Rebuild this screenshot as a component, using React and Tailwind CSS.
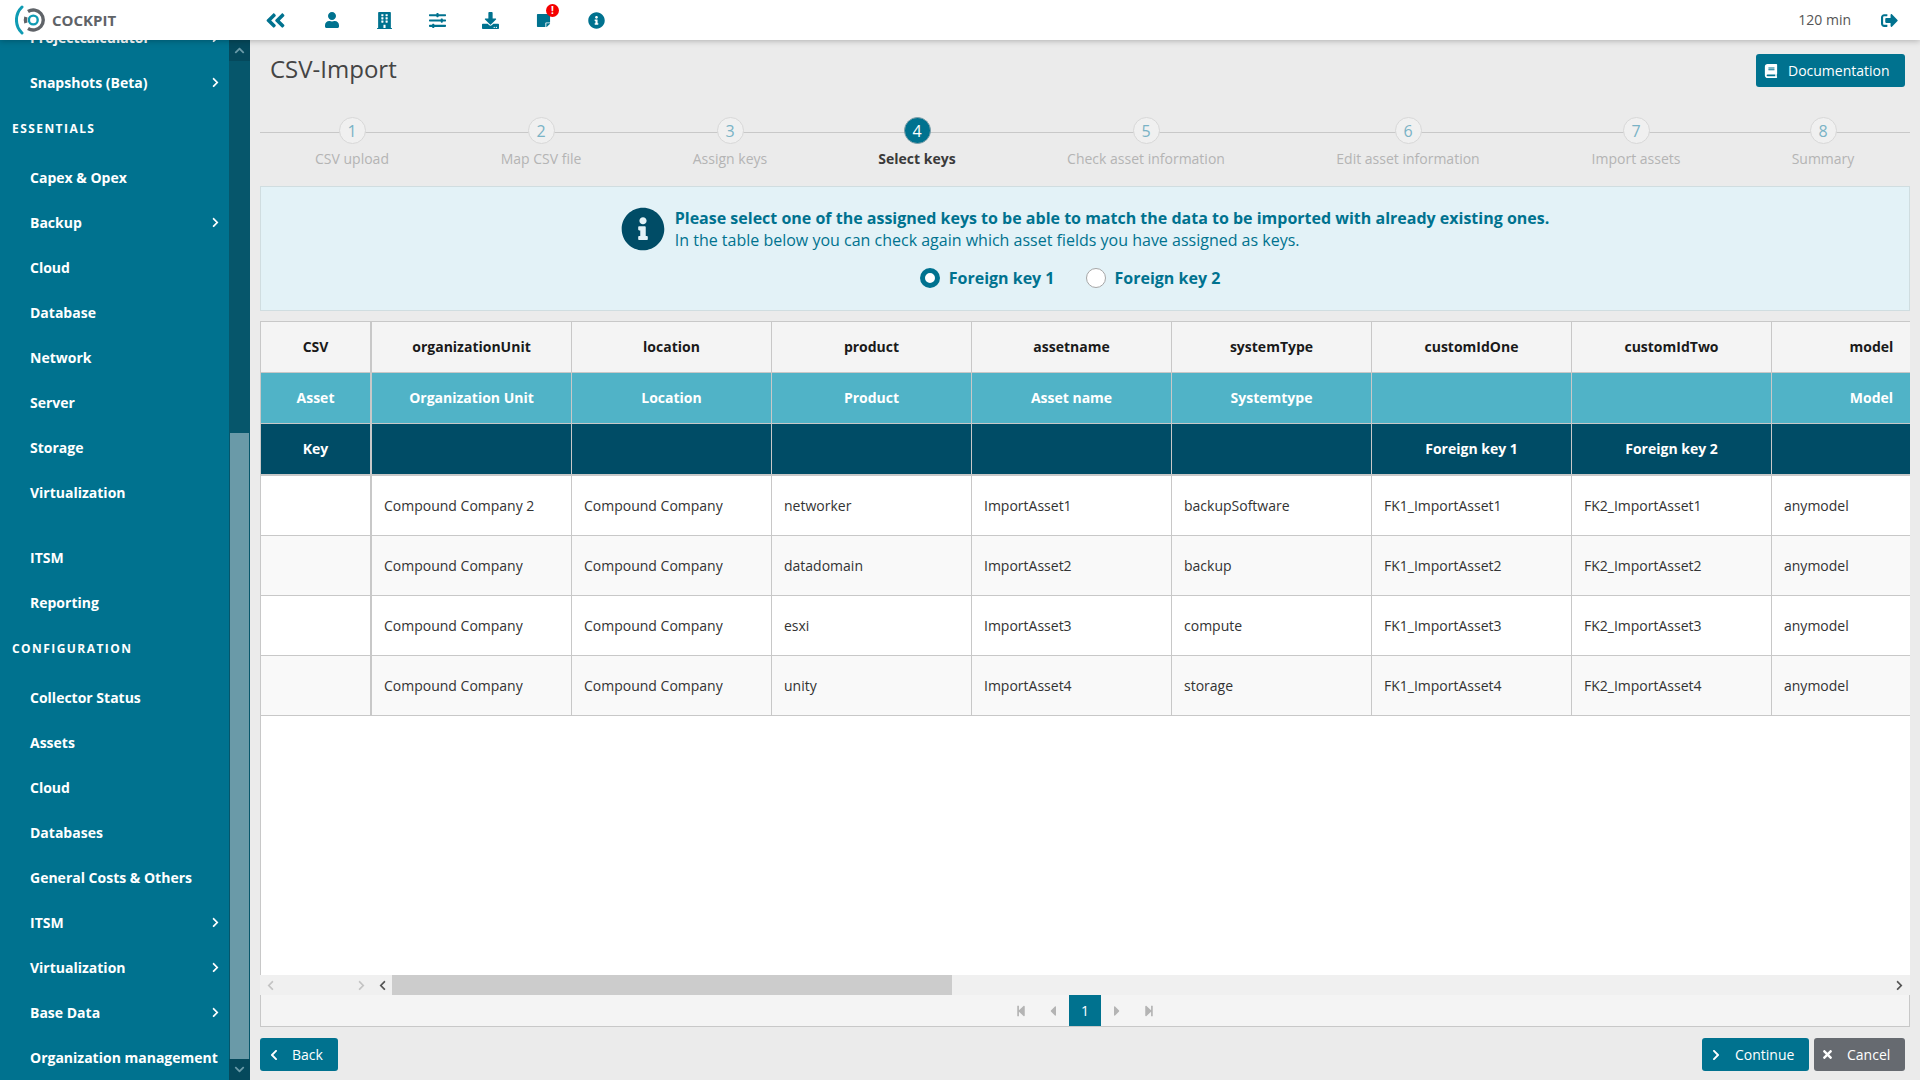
import React from 'react';
import {
  FaAngleDoubleLeft, FaUser, FaBuilding, FaSlidersH, FaDownload, FaStickyNote, FaInfoCircle,
  FaSignOutAlt, FaBook, FaChevronRight, FaChevronLeft, FaChevronUp, FaChevronDown, FaTimes,
  FaStepBackward, FaStepForward, FaCaretLeft, FaCaretRight,
} from 'react-icons/fa';

const menuTop = [
  { label: 'Projectcalculator', arrow: true },
  { label: 'Snapshots (Beta)', arrow: true },
  { head: 'ESSENTIALS' },
  { label: 'Capex & Opex' },
  { label: 'Backup', arrow: true },
  { label: 'Cloud' },
  { label: 'Database' },
  { label: 'Network' },
  { label: 'Server' },
  { label: 'Storage' },
  { label: 'Virtualization' },
  { gap: true },
  { label: 'ITSM' },
  { label: 'Reporting' },
  { head: 'CONFIGURATION' },
  { label: 'Collector Status' },
  { label: 'Assets' },
  { label: 'Cloud' },
  { label: 'Databases' },
  { label: 'General Costs & Others' },
  { label: 'ITSM', arrow: true },
  { label: 'Virtualization', arrow: true },
  { label: 'Base Data', arrow: true },
  { label: 'Organization management' },
];

const steps = [
  { n: 1, label: 'CSV upload', w: 'w-[184px]' },
  { n: 2, label: 'Map CSV file', w: 'w-[194px]' },
  { n: 3, label: 'Assign keys', w: 'w-[184px]' },
  { n: 4, label: 'Select keys', w: 'w-[190px]', active: true },
  { n: 5, label: 'Check asset information', w: 'w-[268px]' },
  { n: 6, label: 'Edit asset information', w: 'w-[256px]' },
  { n: 7, label: 'Import assets', w: 'w-[200px]' },
  { n: 8, label: 'Summary', w: 'w-[174px]' },
];

const csvCols = ['organizationUnit', 'location', 'product', 'assetname', 'systemType', 'customIdOne', 'customIdTwo', 'model'];
const assetCols = ['Organization Unit', 'Location', 'Product', 'Asset name', 'Systemtype', '', '', 'Model'];
const keyCols = ['', '', '', '', '', 'Foreign key 1', 'Foreign key 2', ''];

const rows = [
  ['Compound Company 2', 'Compound Company', 'networker', 'ImportAsset1', 'backupSoftware', 'FK1_ImportAsset1', 'FK2_ImportAsset1', 'anymodel'],
  ['Compound Company', 'Compound Company', 'datadomain', 'ImportAsset2', 'backup', 'FK1_ImportAsset2', 'FK2_ImportAsset2', 'anymodel'],
  ['Compound Company', 'Compound Company', 'esxi', 'ImportAsset3', 'compute', 'FK1_ImportAsset3', 'FK2_ImportAsset3', 'anymodel'],
  ['Compound Company', 'Compound Company', 'unity', 'ImportAsset4', 'storage', 'FK1_ImportAsset4', 'FK2_ImportAsset4', 'anymodel'],
];

// logo: teal arc on the left, grey broken ring, small teal ring in the middle
const Logo = () => (
  <svg width="32" height="30" viewBox="0 0 32 30" className="shrink-0">
    <path d="M7 2 A 18 18 0 0 0 7 28" fill="none" stroke="#0f9bb3" strokeWidth="3" strokeLinecap="round" />
    <path d="M13 6.5 A 10 10 0 1 1 13 23.5" fill="none" stroke="#5f6368" strokeWidth="3.4" />
    <path d="M10.9 12 A 10 10 0 0 0 10.9 18" fill="none" stroke="#5f6368" strokeWidth="3.4" />
    <circle cx="18.3" cy="15" r="4.4" fill="none" stroke="#0f9bb3" strokeWidth="2.4" />
  </svg>
);

const Header = () => (
  <header className="relative z-10 flex h-10 shrink-0 items-center bg-white shadow-[0_1px_6px_rgba(0,0,0,0.25)]">
    <div className="flex w-[249px] items-center pl-[15px]">
      <Logo />
      <span className="ml-[5px] text-[15px] font-bold text-[#5f6368]">COCKPIT</span>
    </div>
    <div className="flex items-center text-[#00728f]">
      <span className="mr-[3px] flex w-[53px] justify-center"><FaAngleDoubleLeft size={23} /></span>
      <span className="flex w-[53px] justify-center"><FaUser size={16} /></span>
      <span className="flex w-[53px] justify-center"><FaBuilding size={17} /></span>
      <span className="flex w-[53px] justify-center"><FaSlidersH size={17} /></span>
      <span className="flex w-[53px] justify-center"><FaDownload size={17} /></span>
      <span className="relative flex w-[53px] justify-center">
        <FaStickyNote size={15} />
        <span className="absolute left-[29px] top-[-9px] flex h-[13px] w-[13px] items-center justify-center rounded-full bg-[#f40000] text-[10px] font-bold leading-none text-white">!</span>
      </span>
      <span className="flex w-[53px] justify-center"><FaInfoCircle size={17} /></span>
    </div>
    <div className="ml-auto flex items-center pr-[22px]">
      <span className="text-sm text-[#555]">120 min</span>
      <FaSignOutAlt size={17} className="ml-[30px] text-[#00728f]" />
    </div>
  </header>
);

const Sidebar = () => (
  <aside className="flex w-[250px] shrink-0 overflow-hidden">
    <nav className="w-[229px] overflow-hidden bg-[#00728f] text-white">
      <div className="mt-[-25px]">
        {menuTop.map((item, idx) => {
          if (item.gap) return <div key={idx} className="h-5" />;
          if (item.head) {
            return (
              <div key={idx} className="flex h-[50px] items-center pb-[2px] pl-3 text-xs font-bold tracking-[0.12em]">
                {item.head}
              </div>
            );
          }
          return (
            <div key={idx} className="flex h-[45px] items-center justify-between pl-[30px] pr-[8px] text-sm font-bold">
              <span>{item.label}</span>
              {item.arrow && <FaChevronRight size={11} />}
            </div>
          );
        })}
      </div>
    </nav>
    <div className="flex w-[21px] flex-col bg-[#06566b]">
      <div className="flex h-[21px] items-center justify-center bg-[#05495c] text-[#6a9aa8]">
        <FaChevronUp size={11} />
      </div>
      <div className="h-[372px]" />
      <div className="mx-[1px] flex-1 bg-[#6a9aa8]" />
      <div className="flex h-[21px] items-center justify-center bg-[#05495c] text-[#6a9aa8]">
        <FaChevronDown size={11} />
      </div>
    </div>
  </aside>
);

const Stepper = () => (
  <div className="relative flex h-[69px] shrink-0">
    <div className="absolute left-0 right-0 top-[15px] h-px bg-[#c8c8c8]" />
    {steps.map(s => (
      <div key={s.n} className={`relative flex shrink-0 flex-col items-center ${s.w}`}>
        {s.active ? (
          <div className="flex h-[27px] w-[27px] items-center justify-center rounded-full border border-[#7f9fa9] bg-[#00728f] text-base leading-none text-white">{s.n}</div>
        ) : (
          <div className="flex h-[27px] w-[27px] items-center justify-center rounded-full border border-[#d8d8d8] bg-[#f0f0f0] text-base leading-none text-[#7ab3c6]">{s.n}</div>
        )}
        <div className={s.active ? 'mt-[5px] text-sm leading-5 font-bold text-[#3a3a3a]' : 'mt-[5px] text-sm leading-5 text-[#b4b4b4]'}>
          {s.label}
        </div>
      </div>
    ))}
  </div>
);

const InfoBox = () => (
  <div className="flex h-[125px] shrink-0 flex-col items-center border border-[#d0dde0] bg-[#e3f2f7] text-[#00728f]">
    <div className="mt-5 flex items-center">
      <FaInfoCircle size={44} className="mr-[10px] text-[#004c66]" />
      <div className="text-base leading-[22px]">
        <div className="font-bold">Please select one of the assigned keys to be able to match the data to be imported with already existing ones.</div>
        <div>In the table below you can check again which asset fields you have assigned as keys.</div>
      </div>
    </div>
    <div className="mr-[30px] mt-[15px] flex items-center text-base font-bold">
      <span className="h-5 w-5 rounded-full border-[5px] border-[#00728f] bg-white" />
      <span className="ml-[9px]">Foreign key 1</span>
      <span className="ml-[31px] h-5 w-5 rounded-full border border-[#a6a6a6] bg-white" />
      <span className="ml-[9px]">Foreign key 2</span>
    </div>
  </div>
);

const DataTable = () => (
  <div className="min-h-0 flex-1 overflow-hidden border-l border-t border-[#c8c8c8]">
    <table className="w-[1711px] table-fixed border-separate border-spacing-0 text-sm">
      <colgroup>
        <col className="w-[111px]" />
        {csvCols.map(c => <col key={c} className="w-[200px]" />)}
      </colgroup>
      <tbody>
        <tr className="bg-[#f4f4f4] font-bold text-[#1a1a1a]">
          <td className="h-[51px] border-b border-r-2 border-[#c8c8c8] text-center">CSV</td>
          {csvCols.map(c => <td key={c} className="h-[51px] border-b border-r border-[#c8c8c8] text-center">{c}</td>)}
        </tr>
        <tr className="bg-[#50b3c7] font-bold text-white">
          <td className="h-[51px] border-b border-r-2 border-[#c8c8c8] text-center">Asset</td>
          {assetCols.map((c, idx) => <td key={idx} className="h-[51px] border-b border-r border-[#c8c8c8] text-center">{c}</td>)}
        </tr>
        <tr className="bg-[#004c66] font-bold text-white">
          <td className="h-[52px] border-b-2 border-r-2 border-[#c8c8c8] text-center">Key</td>
          {keyCols.map((c, idx) => <td key={idx} className="h-[52px] border-b-2 border-r border-[#c8c8c8] text-center">{c}</td>)}
        </tr>
        {rows.map((row, idx) => (
          <tr key={idx} className={idx % 2 === 0 ? 'bg-white text-[#333]' : 'bg-[#f9f9f9] text-[#333]'}>
            <td className="h-[60px] border-b border-r-2 border-[#c8c8c8]" />
            {row.map((cell, i) => (
              <td key={i} className="h-[60px] border-b border-r border-[#c8c8c8] px-3">{cell}</td>
            ))}
          </tr>
        ))}
      </tbody>
    </table>
  </div>
);

const TablePanel = () => (
  <div className="flex min-h-0 flex-1 flex-col bg-white">
    <DataTable />
    <div className="flex h-5 shrink-0 items-center bg-[#f0f0f0]">
      <div className="flex w-[112px] items-center justify-between px-[5px] text-[#c4c4c4]">
        <FaChevronLeft size={11} />
        <FaChevronRight size={11} />
      </div>
      <div className="flex w-5 justify-center text-[#555]"><FaChevronLeft size={11} /></div>
      <div className="h-full w-[560px] bg-[#cccccc]" />
      <div className="ml-auto flex w-[22px] justify-center text-[#555]"><FaChevronRight size={11} /></div>
    </div>
    <div className="flex h-8 shrink-0 items-center justify-center border-x border-b border-[#c8c8c8] bg-[#f4f4f4] text-[#b4b4b4]">
      <span className="flex w-8 justify-center"><FaStepBackward size={12} /></span>
      <span className="flex w-8 justify-center"><FaCaretLeft size={16} /></span>
      <span className="flex h-full w-8 items-center justify-center bg-[#00728f] text-sm text-white">1</span>
      <span className="flex w-8 justify-center"><FaCaretRight size={16} /></span>
      <span className="flex w-8 justify-center"><FaStepForward size={12} /></span>
    </div>
  </div>
);

const Button = ({ icon, label, className }) => (
  <button className={`flex h-[33px] items-center rounded-[3px] text-sm text-white ${className}`}>
    {icon}
    <span>{label}</span>
  </button>
);

export default function App() {
  return (
    <div className="flex h-screen w-screen flex-col overflow-hidden bg-[#ebebeb] font-['Open_Sans',sans-serif]">
      <Header />
      <div className="flex min-h-0 flex-1">
        <Sidebar />
        <main className="flex min-w-0 flex-1 flex-col px-[10px]">
          <div className="flex h-[77px] shrink-0 items-start justify-between pr-[5px]">
            <h1 className="ml-[10px] mt-[11px] text-2xl leading-9 text-[#444]">CSV-Import</h1>
            <Button
              className="mt-[14px] w-[149px] bg-[#00728f]"
              icon={<FaBook size={14} className="ml-[8px] mr-[10px]" />}
              label="Documentation"
            />
          </div>
          <Stepper />
          <InfoBox />
          <div className="h-[10px] shrink-0" />
          <TablePanel />
          <div className="flex h-[53px] shrink-0 items-start justify-between pr-[5px] pt-[11px]">
            <Button
              className="w-[78px] bg-[#00728f]"
              icon={<FaChevronLeft size={12} className="ml-[8px] mr-[12px]" />}
              label="Back"
            />
            <div className="flex gap-[5px]">
              <Button
                className="w-[107px] bg-[#00728f]"
                icon={<FaChevronRight size={12} className="ml-[8px] mr-[13px]" />}
                label="Continue"
              />
              <Button
                className="w-[91px] bg-[#666a70]"
                icon={<FaTimes size={13} className="ml-[7px] mr-[13px]" />}
                label="Cancel"
              />
            </div>
          </div>
        </main>
      </div>
    </div>
  );
}
